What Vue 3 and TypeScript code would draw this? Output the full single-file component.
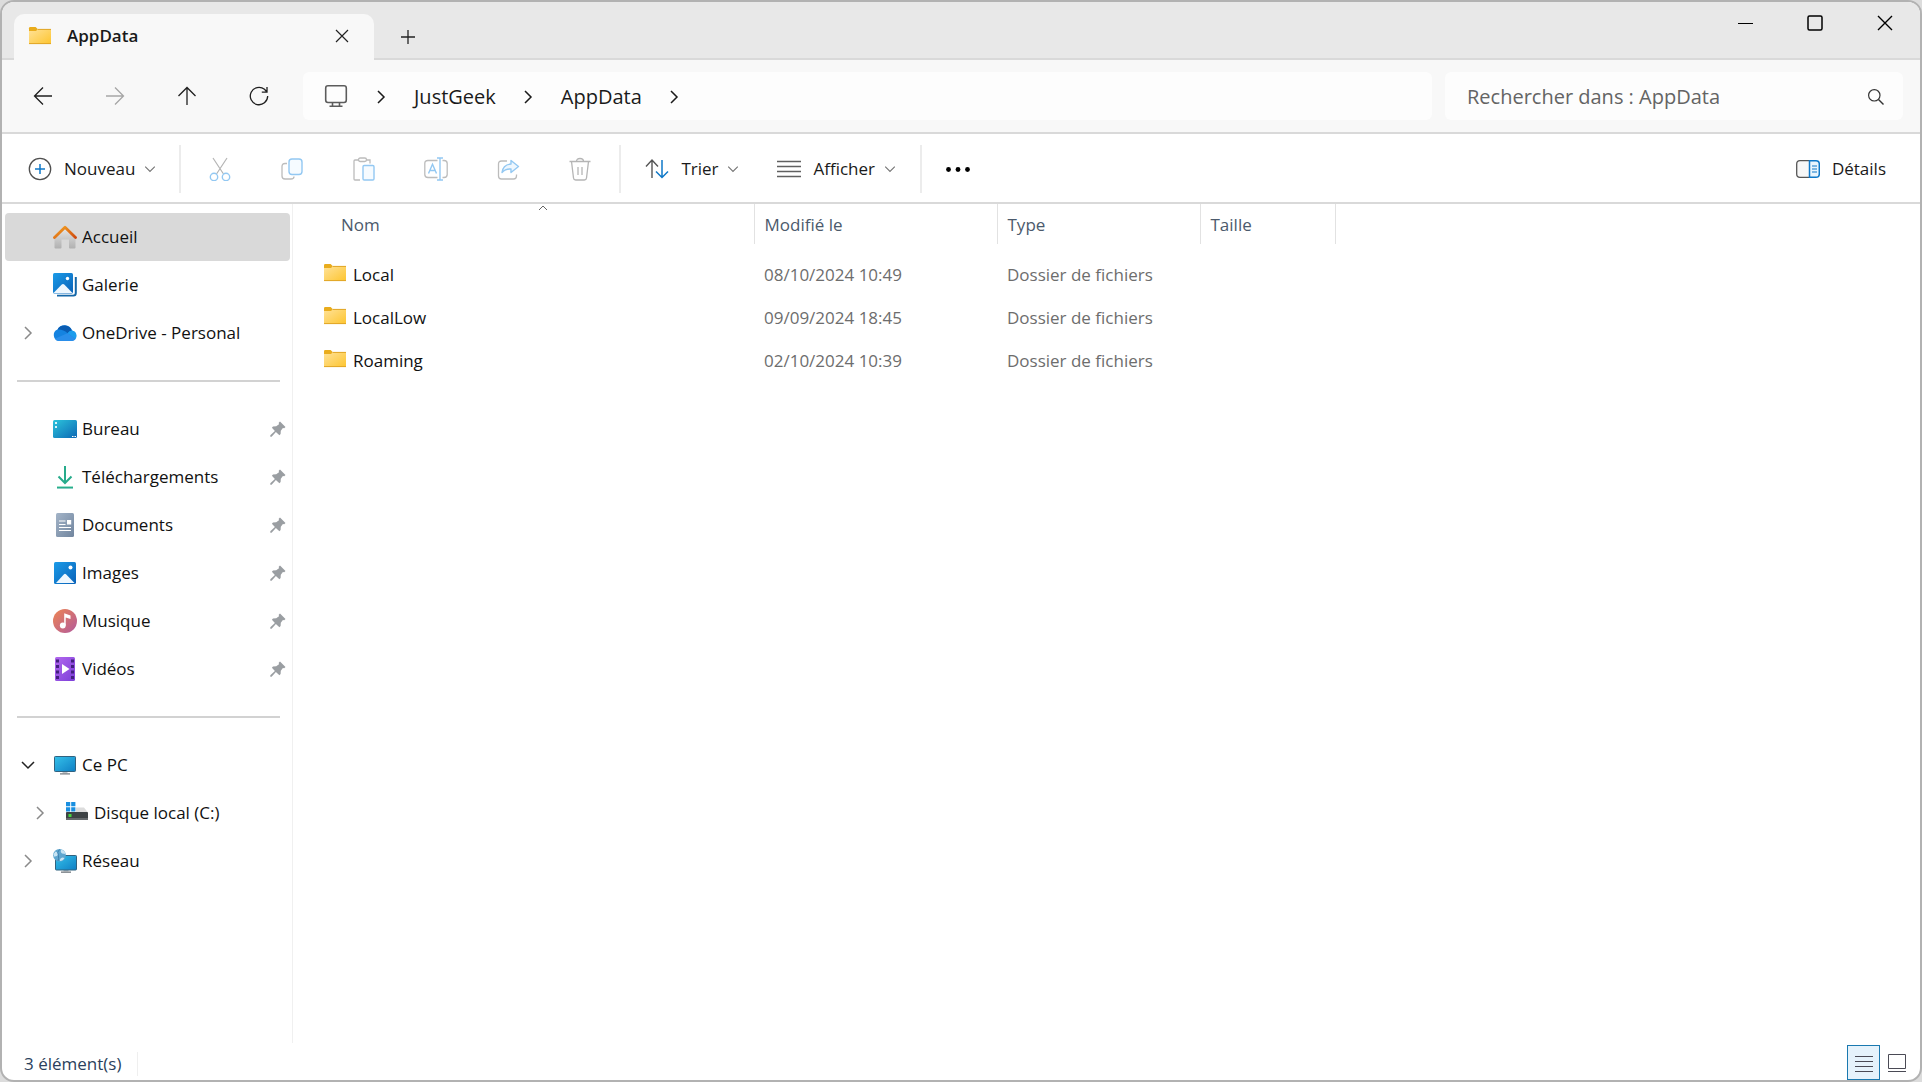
<script setup lang="ts">
import { ref } from 'vue'

interface Place {
  label: string
  icon: string
  pinned?: boolean
  toggle?: 'closed' | 'open'
  nested?: boolean
}

interface Entry {
  name: string
  modified: string
  type: string
  size: string
}

const placeGroups: Place[][] = [
  [
    { label: 'Accueil', icon: 'home' },
    { label: 'Galerie', icon: 'gallery' },
    { label: 'OneDrive - Personal', icon: 'cloud', toggle: 'closed' },
  ],
  [
    { label: 'Bureau', icon: 'desktop', pinned: true },
    { label: 'Téléchargements', icon: 'download', pinned: true },
    { label: 'Documents', icon: 'document', pinned: true },
    { label: 'Images', icon: 'picture', pinned: true },
    { label: 'Musique', icon: 'music', pinned: true },
    { label: 'Vidéos', icon: 'video', pinned: true },
  ],
  [
    { label: 'Ce PC', icon: 'pc', toggle: 'open' },
    { label: 'Disque local (C:)', icon: 'disk', toggle: 'closed', nested: true },
    { label: 'Réseau', icon: 'network', toggle: 'closed' },
  ],
]

const entries: Entry[] = [
  { name: 'Local', modified: '08/10/2024 10:49', type: 'Dossier de fichiers', size: '' },
  { name: 'LocalLow', modified: '09/09/2024 18:45', type: 'Dossier de fichiers', size: '' },
  { name: 'Roaming', modified: '02/10/2024 10:39', type: 'Dossier de fichiers', size: '' },
]

const fileActions = [
  { icon: 'cut', label: 'Couper' },
  { icon: 'copy', label: 'Copier' },
  { icon: 'paste', label: 'Coller' },
  { icon: 'rename', label: 'Renommer' },
  { icon: 'share', label: 'Partager' },
  { icon: 'trash', label: 'Supprimer' },
]

const selected = ref('Accueil')
const query = ref('')
</script>

<template>
  <svg class="sprite" aria-hidden="true">
    <defs>
      <linearGradient id="g-folder" x1="0" y1="0" x2="1" y2="1">
        <stop offset="0" stop-color="#ffe299" /><stop offset="1" stop-color="#fdc52f" />
      </linearGradient>
      <linearGradient id="g-roof" x1="0" y1="0" x2="1" y2="1">
        <stop offset="0" stop-color="#f5a623" /><stop offset="1" stop-color="#cf4a10" />
      </linearGradient>
      <linearGradient id="g-wall" x1="0" y1="0" x2="0" y2="1">
        <stop offset="0" stop-color="#e6e6e6" /><stop offset="1" stop-color="#b0b0b0" />
      </linearGradient>
      <linearGradient id="g-blue" x1="0" y1="0" x2="1" y2="1">
        <stop offset="0" stop-color="#1b9be8" /><stop offset="1" stop-color="#0a62b8" />
      </linearGradient>
      <linearGradient id="g-desk" x1="0" y1="0" x2="1" y2="1">
        <stop offset="0" stop-color="#2cc4dc" /><stop offset="1" stop-color="#0c68b4" />
      </linearGradient>
      <linearGradient id="g-screen" x1="0" y1="0" x2="1" y2="1">
        <stop offset="0" stop-color="#35c1ea" /><stop offset="1" stop-color="#0f7fc4" />
      </linearGradient>
      <linearGradient id="g-doc" x1="0" y1="0" x2="1" y2="1">
        <stop offset="0" stop-color="#a3b4c8" /><stop offset="1" stop-color="#71859e" />
      </linearGradient>
      <linearGradient id="g-music" x1="0" y1="0" x2="1" y2="1">
        <stop offset="0" stop-color="#ee8552" /><stop offset="1" stop-color="#b25a9c" />
      </linearGradient>
      <linearGradient id="g-video" x1="0" y1="0" x2="1" y2="1">
        <stop offset="0" stop-color="#b267ee" /><stop offset="1" stop-color="#7c3fd8" />
      </linearGradient>
      <linearGradient id="g-down" x1="0" y1="0" x2="0" y2="1">
        <stop offset="0" stop-color="#3cc193" /><stop offset="1" stop-color="#149a86" />
      </linearGradient>
    </defs>

    <symbol id="i-folder" viewBox="0 0 24 24">
      <path d="M1 4.2Q1 3 2.2 3H7.6L9.6 5V8H1Z" fill="#e9ac1c" />
      <path d="M1 7H8L10 5H22.4Q23 5 23 5.6V19.4Q23 20 22.4 20H1.6Q1 20 1 19.4Z" fill="url(#g-folder)" />
      <path d="M9.6 5.4H23M1 19.6H23" fill="none" stroke="#e0a526" stroke-width="1" />
    </symbol>

    <symbol id="i-home" viewBox="0 0 24 24">
      <path d="M1.5 13L12 3L22.5 13V22.5Q22.5 23.5 21.5 23.5H17Q16 23.5 16 22.5V14.500H8.500V22.500Q8.500 23.500 7.500 23.500H2.500Q1.500 23.500 1.500 22.500Z" fill="url(#g-wall)" />
      <path d="M1.500 12.500L12 2.200L22.500 12.500" fill="none" stroke="url(#g-roof)" stroke-width="2.800" stroke-linecap="round" stroke-linejoin="round" />
    </symbol>

    <symbol id="i-gallery" viewBox="0 0 24 24">
      <path d="M4 22.500H20.500Q22.800 22.500 22.800 20V4" fill="none" stroke="#1467a8" stroke-width="2" />
      <rect x="0" y="0" width="21" height="21.500" rx="1.500" fill="#fff" />
      <rect x="0" y="0" width="20" height="20.500" rx="1.500" fill="url(#g-blue)" />
      <path d="M0.500 20L8.500 11.700Q10 10.500 11.500 11.700L19.500 20Z" fill="#eef7fe" />
      <circle cx="14.500" cy="5.500" r="1.700" fill="#fff" />
    </symbol>

    <symbol id="i-cloud" viewBox="0 0 24 24">
      <path d="M6 20A6 6 0 0 1 4.500 8.500A8 8 0 0 1 19 9.500A5.400 5.400 0 0 1 19 20Z" fill="#1583e0" />
      <path d="M4.500 8.600A8 8 0 0 1 19 9.500Q16.500 9.800 14.500 12.300Q10 8 4.500 8.600Z" fill="#0a5cb2" />
      <path d="M2 17.500L14.500 12.300Q16.500 9.300 19 9.500A5.400 5.400 0 0 1 22.500 18L14.500 12.300Z" fill="#1c9cec" />
      <path d="M1.800 17.700L14.500 12.300L22.600 18Q21.500 20 18.500 20H6Q3.300 20 1.800 17.700Z" fill="#2a8eea" />
    </symbol>

    <symbol id="i-desktop" viewBox="0 0 24 24">
      <rect x="0" y="3" width="24" height="18" rx="1.500" fill="url(#g-desk)" />
      <path d="M2 5H4V7H2ZM2 9H4V11H2Z" fill="#d8f6fb" />
      <path d="M19 19.500H20.500M21.500 19.500H23" stroke="#fff" stroke-width="1" />
    </symbol>

    <symbol id="i-download" viewBox="0 0 24 24">
      <path d="M12 1V17.500M5.500 11.500L12 18L18.500 11.500" fill="none" stroke="#27ab8b" stroke-width="2" />
      <path d="M4 21.500H20V23.500H4Z" fill="url(#g-down)" />
    </symbol>

    <symbol id="i-document" viewBox="0 0 24 24">
      <rect x="3" y="0" width="18" height="24" rx="1.500" fill="url(#g-doc)" />
      <path d="M6 8H12.500M6 11.500H12.500M6 14.500H18M6 17.500H18" stroke="#fff" stroke-width="1.200" />
      <rect x="14" y="7" width="4.200" height="4.500" fill="#fff" />
    </symbol>

    <symbol id="i-picture" viewBox="0 0 24 24">
      <rect x="1" y="1" width="22" height="22" rx="1.500" fill="url(#g-blue)" />
      <path d="M3 22L11 13.200Q12 12.300 13 13.200L21.500 22Z" fill="#eef7fe" />
      <circle cx="17.500" cy="6.500" r="2" fill="#fff" />
    </symbol>

    <symbol id="i-music" viewBox="0 0 24 24">
      <circle cx="12" cy="12" r="12" fill="url(#g-music)" />
      <circle cx="9.800" cy="16.500" r="2.900" fill="#fff" />
      <path d="M11.200 4.200L17.500 6.500V10L12.700 8.400V16.500H11.200Z" fill="#fff" />
    </symbol>

    <symbol id="i-video" viewBox="0 0 24 24">
      <rect x="2" y="0" width="20" height="24" rx="1.500" fill="url(#g-video)" />
      <path d="M4.500 2.500V22M19.500 2.500V22" stroke="#43207e" stroke-width="3" stroke-dasharray="3 2.500" />
      <path d="M9 7L16.500 12L9 17Z" fill="#fff" />
    </symbol>

    <symbol id="i-pc" viewBox="0 0 24 24">
      <path d="M9.500 18H14.500V20.500H9.500Z" fill="#b9bfc4" />
      <path d="M7 20.300H17V21.500H7Z" fill="#70777d" />
      <rect x="1.500" y="3.500" width="21" height="15" rx="0.800" fill="url(#g-screen)" stroke="#31627f" />
    </symbol>

    <symbol id="i-disk" viewBox="0 0 24 24">
      <path d="M1 11L5 6.500H19L23 11.500Z" fill="#dcdcdc" />
      <rect x="1" y="11" width="22" height="8" rx="0.800" fill="#3d4245" />
      <path d="M1 17H23V19H1Z" fill="#65696c" />
      <rect x="3.500" y="13" width="3" height="3" fill="#44d440" />
      <rect x="0" y="0" width="11" height="11" fill="#fff" />
      <path d="M1 1H5.200V5.200H1ZM6.200 1H10.400V5.200H6.200ZM1 6.200H5.200V10.400H1ZM6.200 6.200H10.400V10.400H6.200Z" fill="#1a8fe0" />
    </symbol>

    <symbol id="i-network" viewBox="0 0 24 24">
      <path d="M10.500 20H15.500V22.500H10.500Z" fill="#b9bfc4" />
      <path d="M8 22.500H18V23.800H8Z" fill="#70777d" />
      <rect x="2.500" y="6.500" width="21" height="14.500" rx="0.800" fill="url(#g-screen)" stroke="#31627f" />
      <circle cx="6.500" cy="6.300" r="6.300" fill="#5fa6cf" />
      <path d="M2.500 2.500Q5 3 5 5.500Q4 8 1 7.500L0.700 5ZM8 0.500Q7 3 9 4.500L12.500 5Q12 1.500 8 0.500ZM7 12Q6.500 9 9.500 8.500L11.500 9Q10 12 7 12Z" fill="#c8e4f3" />
      <path d="M6.500 0.500Q3.500 3 5.500 6.500Q6 9.500 5 12" fill="none" stroke="#3c7fae" stroke-width="1" />
    </symbol>

    <symbol id="i-pin" viewBox="0 0 16 16">
      <path d="M10 0.500L15.500 6L14.200 7.200L12.900 7L10.800 9.800L10.600 13L9.400 14.200L5.900 10.900L1.600 15.800L0.300 15.800V14.300L4.900 10L1.900 6.700L3 5.500L6.200 5.300L9 3.200L8.700 1.800Z" fill="#9a9ea2" />
    </symbol>

    <symbol id="i-chevron" viewBox="0 0 16 16">
      <path d="M5 2L11 8L5 14" fill="none" stroke="currentColor" stroke-width="1.500" />
    </symbol>

    <symbol id="i-caret" viewBox="0 0 10 10">
      <path d="M1 3L5 7L9 3" fill="none" stroke="currentColor" stroke-width="1" />
    </symbol>

    <symbol id="i-cut" viewBox="0 0 24 24">
      <path d="M5 1L15.500 17M19 1L8.500 17" fill="none" stroke="#b5b5b5" stroke-width="1.200" />
      <circle cx="6" cy="20" r="3.700" fill="none" stroke="#93c8f2" stroke-width="1.400" />
      <circle cx="18" cy="20" r="3.700" fill="none" stroke="#93c8f2" stroke-width="1.400" />
    </symbol>

    <symbol id="i-copy" viewBox="0 0 24 24">
      <path d="M7 6.500H5Q2 6.500 2 9.500V19Q2 22 5 22H11Q14 22 14 19.500" fill="none" stroke="#bcbcbc" stroke-width="1.300" />
      <rect x="9" y="2" width="13" height="15.500" rx="3" fill="#f6fbff" stroke="#93c8f2" stroke-width="1.400" />
    </symbol>

    <symbol id="i-paste" viewBox="0 0 24 24">
      <path d="M8 23H3Q2 23 2 22V4Q2 3 3 3H6.500M14.500 3H18V6.500" fill="none" stroke="#bcbcbc" stroke-width="1.300" />
      <rect x="6.500" y="1" width="8" height="3.500" rx="1.700" fill="none" stroke="#bcbcbc" stroke-width="1.300" />
      <rect x="11" y="8.500" width="11" height="14.500" rx="1.200" fill="#f6fbff" stroke="#93c8f2" stroke-width="1.400" />
    </symbol>

    <symbol id="i-rename" viewBox="0 0 24 24">
      <path d="M13.500 3.500H4Q0.800 3.500 0.800 6.500V17.500Q0.800 20.500 4 20.500H13.500M18.500 3.500H20Q23.200 3.500 23.200 6.500V17.500Q23.200 20.500 20 20.500H18.500" fill="none" stroke="#bcbcbc" stroke-width="1.300" />
      <path d="M4.500 16.500L8.500 7.300L12.500 16.500M6 13.500H11M13 1H19M16 1V23M13 23H19" fill="none" stroke="#93c8f2" stroke-width="1.400" />
    </symbol>

    <symbol id="i-share" viewBox="0 0 24 24">
      <path d="M11 4H5.500Q2.500 4 2.500 7V19Q2.500 22 5.500 22H17.500Q20.500 22 20.500 19V17.500" fill="none" stroke="#bcbcbc" stroke-width="1.300" />
      <path d="M15 3.500L22.500 9.500L15 15.500V12Q9.500 11.500 6 15.500Q7 7.500 15 7Z" fill="#eef7fe" stroke="#93c8f2" stroke-width="1.400" stroke-linejoin="round" />
    </symbol>

    <symbol id="i-trash" viewBox="0 0 24 24">
      <path d="M1.500 4.500H22.500M8.500 4.500Q8.500 1.500 12 1.500Q15.500 1.500 15.500 4.500M3.500 4.500L5.500 21Q5.700 23 7.700 23H16.300Q18.300 23 18.500 21L20.500 4.500M10 10V18M14 10V18" fill="none" stroke="#b5b5b5" stroke-width="1.300" />
    </symbol>
  </svg>

  <div class="window">
    <header class="titlebar">
      <div class="tab">
        <svg class="icon"><use href="#i-folder" /></svg>
        <span class="tab-title">AppData</span>
        <button class="tab-close" type="button" aria-label="Fermer l'onglet">
          <svg width="14" height="14" viewBox="0 0 14 14"><path d="M1 1L13 13M13 1L1 13" fill="none" stroke="#222" stroke-width="1.200" /></svg>
        </button>
      </div>
      <button class="tab-add" type="button" aria-label="Nouvel onglet">
        <svg width="16" height="16" viewBox="0 0 16 16"><path d="M8 1V15M1 8H15" fill="none" stroke="#222" stroke-width="1.300" /></svg>
      </button>
      <div class="caption">
        <button type="button" aria-label="Réduire">
          <svg width="16" height="16" viewBox="0 0 16 16"><path d="M1 8.500H16" stroke="#000" /></svg>
        </button>
        <button type="button" aria-label="Agrandir">
          <svg width="16" height="16" viewBox="0 0 16 16"><rect x="1" y="1" width="14" height="14" rx="1.500" fill="none" stroke="#000" stroke-width="1.500" /></svg>
        </button>
        <button type="button" aria-label="Fermer">
          <svg width="16" height="16" viewBox="0 0 16 16"><path d="M1 1L15 15M15 1L1 15" fill="none" stroke="#000" stroke-width="1.400" /></svg>
        </button>
      </div>
    </header>

    <div class="navbar">
      <div class="nav-buttons">
        <button type="button" aria-label="Précédent">
          <svg width="20" height="20" viewBox="0 0 20 20"><path d="M19 10H1.500M10 1.500L1.500 10L10 18.500" fill="none" stroke="#1f1f1f" stroke-width="1.300" /></svg>
        </button>
        <button type="button" aria-label="Suivant" disabled>
          <svg width="20" height="20" viewBox="0 0 20 20"><path d="M1 10H18.500M10 1.500L18.500 10L10 18.500" fill="none" stroke="#a6a6a6" stroke-width="1.300" /></svg>
        </button>
        <button type="button" aria-label="Dossier parent">
          <svg width="20" height="20" viewBox="0 0 20 20"><path d="M10 19V1.500M1.500 10L10 1.500L18.500 10" fill="none" stroke="#1f1f1f" stroke-width="1.300" /></svg>
        </button>
        <button type="button" aria-label="Actualiser">
          <svg width="20" height="20" viewBox="0 0 20 20"><path d="M18.700 10A8.700 8.700 0 1 1 15.500 3.300L18 6M18 1V6.200H12.800" fill="none" stroke="#1f1f1f" stroke-width="1.300" /></svg>
        </button>
      </div>
      <nav class="address" aria-label="Chemin">
        <button class="root" type="button" aria-label="Emplacements">
          <svg width="24" height="24" viewBox="0 0 24 24"><path d="M4 0.800H20Q22.300 0.800 22.300 3V15Q22.300 17.500 20 17.500H4Q1.700 17.500 1.700 15V3Q1.700 0.800 4 0.800ZM8.500 17.500V21M15.500 17.500V21M5.500 21.200H18.500" fill="none" stroke="#5c5c5c" stroke-width="1.600" /></svg>
        </button>
        <svg class="crumb-sep"><use href="#i-chevron" /></svg>
        <a class="crumb" href="#justgeek">JustGeek</a>
        <svg class="crumb-sep"><use href="#i-chevron" /></svg>
        <a class="crumb" href="#appdata">AppData</a>
        <svg class="crumb-sep"><use href="#i-chevron" /></svg>
      </nav>
      <label class="search">
        <input v-model="query" type="text" placeholder="Rechercher dans : AppData" aria-label="Rechercher dans : AppData" />
        <svg width="18" height="18" viewBox="0 0 18 18"><path d="M11.500 11.500L16.500 16.500" stroke="#333" stroke-width="1.400" /><circle cx="7.300" cy="7.300" r="5.700" fill="none" stroke="#333" stroke-width="1.200" /></svg>
      </label>
    </div>

    <div class="commands">
      <button class="command new" type="button">
        <svg class="icon" viewBox="0 0 24 24"><circle cx="12" cy="12" r="10.700" fill="#fff" stroke="#505050" stroke-width="1.300" /><path d="M12 7V17M7 12H17" stroke="#0f78c8" stroke-width="1.500" /></svg>
        <span>Nouveau</span>
        <svg class="caret"><use href="#i-caret" /></svg>
      </button>
      <div class="file-actions">
        <button v-for="action in fileActions" :key="action.icon" type="button" :aria-label="action.label" disabled>
          <svg class="icon"><use :href="'#i-' + action.icon" /></svg>
        </button>
      </div>
      <div class="view-actions">
        <button class="command" type="button">
          <svg class="icon" viewBox="0 0 24 24"><path d="M7 21V3M1 9.500L7 3L13 9.500" fill="none" stroke="#555" stroke-width="1.400" /><path d="M17 3V20.500M11 14.500L17 20.500L23 14.500" fill="none" stroke="#0f78c8" stroke-width="1.500" /></svg>
          <span>Trier</span>
          <svg class="caret"><use href="#i-caret" /></svg>
        </button>
        <button class="command" type="button">
          <svg class="icon" viewBox="0 0 24 24"><path d="M0 4.500H24M0 9.500H24M0 14.500H24M0 19.500H24" stroke="#606060" stroke-width="1.500" /></svg>
          <span>Afficher</span>
          <svg class="caret"><use href="#i-caret" /></svg>
        </button>
      </div>
      <button class="more" type="button" aria-label="Voir plus">
        <svg class="icon" viewBox="0 0 24 24"><circle cx="2.500" cy="12.500" r="2.400" /><circle cx="12" cy="12.500" r="2.400" /><circle cx="21.500" cy="12.500" r="2.400" /></svg>
      </button>
      <button class="command details" type="button">
        <svg class="icon" viewBox="0 0 24 24"><path d="M13 3.700H4Q0.700 3.700 0.700 7V17Q0.700 20.300 4 20.300H13" fill="#f7f7f7" stroke="#555" stroke-width="1.300" /><path d="M13.500 3.700H20Q23.300 3.700 23.300 7V17Q23.300 20.300 20 20.300H13.500Z" fill="#eaf5fd" stroke="#0f78c8" stroke-width="1.500" /><path d="M16 9H21M16 12H21M16 15H21" stroke="#0f78c8" stroke-width="1.200" /></svg>
        <span>Détails</span>
      </button>
    </div>

    <div class="body">
      <nav class="places" aria-label="Emplacements">
        <ul v-for="(group, index) in placeGroups" :key="index">
          <li v-for="place in group" :key="place.label" :class="{ selected: place.label === selected, nested: place.nested }">
            <button v-if="place.toggle" class="toggle" :class="place.toggle" type="button" :aria-label="'Développer ' + place.label">
              <svg><use href="#i-chevron" /></svg>
            </button>
            <span v-else class="toggle"></span>
            <a href="#" @click.prevent="selected = place.label">
              <svg class="icon"><use :href="'#i-' + place.icon" /></svg>
              <span>{{ place.label }}</span>
              <svg v-if="place.pinned" class="pin"><use href="#i-pin" /></svg>
            </a>
          </li>
        </ul>
      </nav>

      <main class="files">
        <table>
          <colgroup>
            <col class="col-name" />
            <col class="col-date" />
            <col class="col-type" />
            <col class="col-size" />
          </colgroup>
          <thead>
            <tr>
              <th class="name" scope="col" aria-sort="ascending">
                <svg class="sort"><use href="#i-caret" /></svg>
                Nom
              </th>
              <th scope="col">Modifié le</th>
              <th scope="col">Type</th>
              <th scope="col">Taille</th>
            </tr>
          </thead>
          <tbody>
            <tr v-for="entry in entries" :key="entry.name">
              <td class="name">
                <div class="entry"><svg class="icon"><use href="#i-folder" /></svg><span>{{ entry.name }}</span></div>
              </td>
              <td>{{ entry.modified }}</td>
              <td>{{ entry.type }}</td>
              <td>{{ entry.size }}</td>
            </tr>
          </tbody>
        </table>
      </main>
    </div>

    <footer class="status">
      <span class="count">3 élément(s)</span>
      <div class="modes">
        <button class="active" type="button" aria-label="Affichage détaillé">
          <svg width="20" height="20" viewBox="0 0 20 20"><path d="M1 3.500H19M1 8.500H19M1 13.500H19M1 18.500H19" stroke="#4a4a55" /></svg>
        </button>
        <button type="button" aria-label="Grandes icônes">
          <svg width="20" height="20" viewBox="0 0 20 20"><path d="M1.500 1.500H18.500V15.500H1.500ZM1 18.500H19" fill="none" stroke="#4a4a55" /></svg>
        </button>
      </div>
    </footer>
  </div>
</template>

<style>
body {
  margin: 0;
  background: #dcdcdc;
}
</style>

<style scoped>
.sprite {
  position: absolute;
  width: 0;
  height: 0;
}

.window {
  box-sizing: border-box;
  display: flex;
  flex-direction: column;
  min-height: 100vh;
  overflow: hidden;
  border: 2px solid #b2b2b2;
  border-radius: 14px;
  background: #fff;
  color: #1a1a1a;
  font-family: "Open Sans", "Noto Sans", sans-serif;
  font-size: 17px;
  line-height: 24px;
}

button {
  display: flex;
  align-items: center;
  justify-content: center;
  margin: 0;
  padding: 0;
  border: 0;
  background: none;
  color: inherit;
  font: inherit;
}

a {
  color: inherit;
  text-decoration: none;
}

svg {
  flex: none;
}

.icon {
  width: 24px;
  height: 24px;
}

.titlebar {
  display: flex;
  align-items: flex-end;
  height: 58px;
  background: #e8e8e8;
  box-shadow: inset 0 -2px #d9d9d9;
}

.tab {
  box-sizing: border-box;
  display: flex;
  align-items: center;
  width: 360px;
  height: 46px;
  margin-left: 12px;
  padding: 0 24px 2px 14px;
  border-radius: 10px 10px 0 0;
  background: #f8f8f8;
}

.tab-title {
  flex: 1;
  margin-left: 15px;
  font-weight: 600;
}

.tab-close {
  width: 16px;
  height: 32px;
}

.tab-add {
  width: 32px;
  height: 46px;
  margin-left: 18px;
}

.caption {
  display: flex;
  align-self: flex-start;
  margin-left: auto;
}

.caption button {
  width: 70px;
  height: 41px;
}

.navbar {
  display: flex;
  align-items: center;
  height: 72px;
  padding-right: 17px;
  border-bottom: 2px solid #d9d9d9;
  background: #f8f8f8;
  font-size: 20px;
}

.nav-buttons {
  display: flex;
  margin: 0 8px 0 5px;
}

.nav-buttons button {
  width: 72px;
  height: 48px;
}

.address,
.search {
  box-sizing: border-box;
  display: flex;
  align-items: center;
  height: 48px;
  padding-top: 2px;
  border-radius: 6px;
  background: #fdfdfd;
}

.address {
  flex: 1;
  margin-right: 13px;
  padding-left: 20px;
}

.root {
  width: 26px;
  height: 40px;
}

.crumb-sep {
  width: 16px;
  height: 16px;
  margin: 0 25px 0 24px;
}

.search {
  width: 458px;
  padding-right: 18px;
}

.search input {
  flex: 1;
  min-width: 0;
  padding: 0 22px;
  border: 0;
  outline: 0;
  background: none;
  color: #1a1a1a;
  font: inherit;
}

.search input::placeholder {
  color: #646464;
  opacity: 1;
}

.commands {
  box-sizing: border-box;
  display: flex;
  align-items: center;
  height: 70px;
  padding: 2px 34px 0 26px;
  border-bottom: 2px solid #d9d9d9;
}

.command {
  height: 48px;
}

.command span {
  margin-left: 12px;
}

.caret {
  width: 12px;
  height: 12px;
  margin-left: 9px;
  color: #777;
}

.new {
  margin-right: 23px;
}

.file-actions,
.view-actions {
  display: flex;
  align-items: center;
  height: 48px;
  border-left: 2px solid #ececec;
}

.file-actions button {
  width: 72px;
  height: 48px;
}

.file-actions {
  padding: 0 3px;
}

.view-actions {
  gap: 38px;
  padding: 0 24px;
  border-right: 2px solid #ececec;
}

.more {
  margin-left: 24px;
  height: 48px;
}

.details {
  margin-left: auto;
}

.body {
  display: flex;
  flex: 1;
}

.places {
  box-sizing: border-box;
  width: 291px;
  padding: 9px 2px 0 3px;
  border-right: 1px solid #f0f0f0;
  color: #111;
}

.places ul {
  margin: 0;
  padding: 0;
  list-style: none;
}

.places ul + ul::before {
  content: "";
  display: block;
  height: 2px;
  margin: 23px 10px 23px 12px;
  background: #d2d2d2;
}

.places li {
  display: flex;
  align-items: center;
  height: 48px;
  border-radius: 4px;
}

.places li.nested {
  padding-left: 12px;
}

.places li.selected {
  background: #d9d9d9;
}

.toggle {
  width: 46px;
  height: 48px;
  color: #8a8a8a;
}

.toggle svg {
  width: 16px;
  height: 16px;
}

.toggle.open svg {
  transform: rotate(90deg);
  color: #222;
}

.places a {
  display: flex;
  flex: 1;
  align-items: center;
  height: 48px;
  padding-left: 2px;
}

.places a span {
  flex: 1;
  margin-left: 5px;
}

.pin {
  width: 16px;
  height: 16px;
  margin-right: 4px;
}

.files {
  flex: 1;
  min-width: 0;
}

table {
  width: 1042px;
  border-collapse: collapse;
  table-layout: fixed;
}

.col-name {
  width: 461px;
}

.col-date {
  width: 243px;
}

.col-type {
  width: 203px;
}

.col-size {
  width: 135px;
}

th {
  position: relative;
  height: 40px;
  padding: 2px 0 0 10px;
  border-right: 1px solid #e2e2e2;
  color: #4c5a6c;
  font-weight: 400;
  text-align: left;
  box-sizing: border-box;
}

th.name {
  padding-left: 48px;
}

.sort {
  position: absolute;
  top: -1px;
  left: 243px;
  width: 14px;
  height: 10px;
  color: #666;
  transform: rotate(180deg);
}

td {
  height: 43px;
  padding: 0 0 0 10px;
  color: #6d6d6d;
  box-sizing: border-box;
}

tbody::before {
  content: "";
  display: block;
  height: 9px;
}

td.name {
  padding-left: 30px;
  color: #111;
}

.entry {
  display: flex;
  align-items: center;
}

.entry .icon {
  margin-bottom: 3px;
}

.entry span {
  margin-left: 6px;
}

.status {
  display: flex;
  align-items: flex-end;
  justify-content: space-between;
  height: 37px;
  padding: 0 7px 0 22px;
  color: #2b3f5c;
}

.count {
  margin-bottom: 4px;
  padding-right: 16px;
  border-right: 1px solid #efefef;
}

.modes {
  display: flex;
}

.modes button {
  box-sizing: border-box;
  width: 33px;
  height: 35px;
}

.modes .active {
  border: 1px solid #1a79b0;
  background: #e5f2fb;
}
</style>
